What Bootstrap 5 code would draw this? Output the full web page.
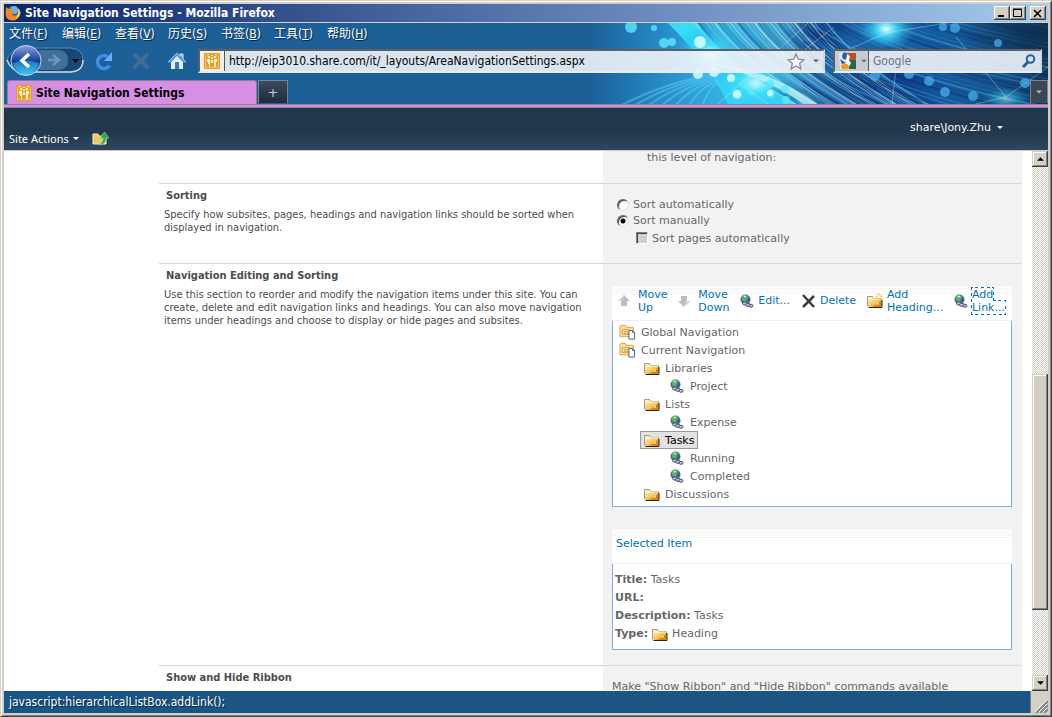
<!DOCTYPE html>
<html lang="en">
<head>
<meta charset="utf-8">
<meta name="viewport" content="width=device-width, initial-scale=1">
<title>Site Navigation Settings</title>
<link href="https://cdn.jsdelivr.net/npm/bootstrap@5.3.0/dist/css/bootstrap.min.css" rel="stylesheet">
<style>
:root{--tahoma:"DejaVu Sans Condensed","DejaVu Sans","Noto Sans CJK SC",sans-serif;--verdana:"DejaVu Sans",sans-serif}
body{font:11px/13px var(--verdana);color:#666;background:#d4d0c8}
button{padding:0;border:0;background:none;color:inherit;font:inherit}
a{text-decoration:none;color:#0072bc}
svg{display:block;flex:none}
.win{border:1px solid;border-color:#d4d0c8 #404040 #404040 #d4d0c8;box-shadow:inset 1px 1px #fff,inset -1px -1px #808080;padding:3px}
.titlebar{height:18px;background:linear-gradient(90deg,#0a246a,#a6caf0);color:#fff;font:bold 12px/18px var(--tahoma);padding:0 2px 0 1px}
.wbtn{width:16px;height:14px;background:#d4d0c8;box-shadow:inset -1px -1px #404040,inset 1px 1px #fff,inset -2px -2px #808080;display:grid;place-items:center}
.chrome{background:#1d5f97;border-top:1px solid #d4d0c8;height:82px;overflow:hidden}
.art{position:absolute;right:0;top:0;height:81px;width:460px}
.menubar{height:21px;padding-left:5px;gap:13px}
.menubar button{width:40px;white-space:nowrap;font:12px/20px "DejaVu Sans Condensed","Noto Sans CJK SC",sans-serif;color:#fff;text-shadow:1px 1px 1px #0a2a48;text-align:left}
.tools{height:33px;padding:0 6px 0 1px}
.field{height:24px;border:2px solid;border-color:#5a6068 #d4d8e0 #e8ecf4 #5a6068;background:rgba(240,243,248,.9);margin-top:1px}
.field input{border:0;background:none;font:12px/18px var(--tahoma);color:#000;min-width:0;padding:0 4px;outline:0}
.field input::placeholder{color:#70757c;opacity:1}
.fav{width:25px;height:20px;border-right:1px solid #555;background:#f3f0ee;display:grid;place-items:center}
.address{margin:1px 8px 0 11px}
.srch{width:209px}
.eng{width:34px;height:20px;background:#c7ccd2;border-right:1px solid #555}
.tabsrow{height:24px;margin-top:3px;padding-left:3px}
.pagetab{width:250px;height:24px;background:#d78fe4;border:1px solid #8c7a94;border-bottom:0;border-radius:3px 3px 0 0;color:#000;font:bold 12px/22px var(--tahoma);padding-left:8px;gap:4px}
.newtab{width:30px;height:23px;background:linear-gradient(#3c4c5e,#1d2b3a);border:1px solid #77838f;border-bottom:0;color:#ccc;font-size:13px;margin-left:1px}
.moretab{width:18px;height:23px;background:#3b4754;border:1px solid #77838f;border-bottom:0}
.pinkline{height:4px;background:#d78fe4;border:solid #8c8494;border-width:1px 0}
.ribbon{height:43px;background:linear-gradient(#21374c 0 55%,#2f465d);border-bottom:1px solid #c4cad8;color:#fff}
.siteact{font:11px/14px "Noto Sans",sans-serif;padding:23px 0 0 5px;gap:13px}
.user{padding:13px 45px 0 0;gap:6px}
.viewport{overflow:hidden;background:#fff}
.sheet{margin-left:155px;margin-right:10px}
.sec{border-top:1px solid #d8d8d8}
.info{flex:none;width:51.45%;color:#4c4c4c;padding:5px 14px 0 5px;font-family:var(--tahoma)}
.form-side{flex:1;min-width:0;background:#f2f2f2;padding:0 10px 0 9px}
.info h2{font:bold 11px/14px var(--tahoma);margin:0 0 5px 2px}
.first{height:32px;border:0}
.first .form-side{padding-left:44px}
.sorting{height:80px}
.sorting .form-side{padding:12px 10px 0 14px}
.opt{height:16px;gap:4px}
.opt input{appearance:none;margin:2px 0 0;width:12px;height:12px;flex:none}
.opt input[type=radio]{border-radius:50%;background:#fff;border:1px solid;border-color:#606060 #e4e0d8 #e4e0d8 #606060;box-shadow:inset 1px 1px #404040}
.opt input[type=radio]:checked{background:radial-gradient(circle,#000 0 2px,#fff 3px)}
.opt input[type=checkbox]{background:#d4d0c8;border:1px solid;border-color:#808080 #fff #fff #808080;box-shadow:inset 1px 1px #404040;margin-top:0}
.subopt{margin:2px 0 0 19px}
.editing{height:402px}
.ribbonopt .form-side{padding-top:14px;height:60px}
.strip{height:35px;margin-top:22px;background:repeating-linear-gradient(#f6f6f6 0 1px,#fff 1px 2px) top/100% 10px no-repeat,#fff;border-bottom:1px solid #eee}
.strip a{display:flex;align-items:center}
.cmds{padding:0 7px 5px 6px}
.picked{padding:8px 4px}
.boxed{background:#fff;border:1px solid #84abe2;border-top:0}
.tree{height:186px;padding:2px 0 0 6px}
.tree ul{list-style:none;margin:0;padding:0 0 0 25px}
.tree ul ul{padding-left:26px}
.tree span{display:flex;align-items:center;height:18px;gap:5px;width:max-content}
.tree ul ul span{gap:6px}
.tree .on{color:#000;background:#e2e2e2;box-shadow:0 0 0 1px #999;margin:1px 0 1px -3px;padding:0 3px;height:16px}
.focused{outline:1px dotted #0072bc}
.details{height:86px;padding:7px 2px;line-height:18px}
.sbar{width:16px;background:repeating-conic-gradient(#fff 0 25%,#d4d0c8 0 50%) 0 0/2px 2px}
.sbar button,.thumb{width:16px;color:#000;background:#d4d0c8;box-shadow:inset -1px -1px #404040,inset 1px 1px #d4d0c8,inset -2px -2px #808080,inset 2px 2px #fff}
.sbar button{height:16px;display:grid;place-items:center;flex:none}
.upward{transform:rotate(180deg)}
.status{height:22px;background:#1a5586;color:#fff;font:12px/22px var(--tahoma);text-shadow:1px 1px 1px #06233c;padding-left:5px}
.grip{width:18px;background:#d4d0c8;border-left:1px solid #808080}
</style>
</head>
<body>
<svg width="0" height="0" class="position-absolute" aria-hidden="true">
<defs>
<linearGradient id="gold" x1="0" y1="0" x2="1" y2="1"><stop offset="0" stop-color="#fff0b0"/><stop offset=".5" stop-color="#f5c860"/><stop offset="1" stop-color="#d07a06"/></linearGradient>
<linearGradient id="back" x1="0" y1="0" x2="0" y2="1"><stop offset="0" stop-color="#8e9fe0"/><stop offset=".5" stop-color="#16429c"/><stop offset=".55" stop-color="#0d3a8a"/><stop offset="1" stop-color="#3fd0ff"/></linearGradient>
<symbol id="folder" viewBox="0 0 16 13"><path d="M.5 11V1.500h5l1.500 2h7.500V11z" fill="#fbe9ae" stroke="#a39b8e"/><path d="M1 11V4l4 1 4-1h5v8H2z" fill="url(#gold)"/><path d="M1 4h13" stroke="#fff8d8"/><path d="M6 12l8-6v6z" fill="#d88410"/><path d="M8 9l4-2v3z" fill="#fbd469"/><path d="M1.500 12.500h13.500V5" fill="none" stroke="#2b2118"/></symbol>
<symbol id="globe" viewBox="0 0 14 14"><circle cx="5.500" cy="5.500" r="5" fill="#47719a"/><path d="M2 2q3-2 6 0l-1 3-2 3-3-2z" fill="#5fae66"/><path d="M3.500 1.500l3 .5-2 2z" fill="#d6ecd6"/><path d="M7.500 4l2 2-1 2z" fill="#2c4c70"/><g fill="#b9c0d4" stroke="#4f5672"><ellipse cx="5" cy="9.500" rx="2.500" ry="1.600"/><ellipse cx="8" cy="10.800" rx="2.500" ry="1.600"/><ellipse cx="11" cy="11.800" rx="2" ry="1.500"/></g></symbol>
<symbol id="site" viewBox="0 0 18 16"><path d="M1 13V2l1-1h5l1 2h7v10z" fill="#fbdf98" stroke="#d8a04c"/><path d="M3.500 5.500h8v5h-8zM5.500 7.500h4v2h-4z" fill="#fff1c2" stroke="#d79a3c"/><path d="M10.500 6.500h4l2 2v7h-6z" fill="#fff" stroke="#44597c"/><path d="M14.500 6.500v2h2" fill="none" stroke="#44597c"/></symbol>
<symbol id="people" viewBox="0 0 16 16"><rect width="16" height="16" rx="1" fill="#ea9c24"/><path d="M1.500 2v12.500h13V2" fill="none" stroke="#f6c470"/><g fill="#fff2cf"><path d="M3 6h3v8H5v-3H4v-2H3zM10 6h3v3h-1v5h-2zM7 7h2v3H7z"/><circle cx="5" cy="4" r="1.300"/><circle cx="8" cy="5" r="1.100"/><circle cx="11" cy="4" r="1.300"/><path d="M3 1h2v1H3zM7 2h2v1H7zM11 1h2v1h-2z"/></g></symbol>
<symbol id="arrow" viewBox="0 0 12 12"><path d="M6 0l6 6H9v5H3V6H0z" fill="#b9bec2"/><path d="M6 1L2 5.500h2" fill="none" stroke="#dfe2e4"/></symbol>
<symbol id="tri" viewBox="0 0 8 4"><path d="M0 0h8L4 4z" fill="currentColor"/></symbol>
</defs>
</svg>

<div class="win vh-100 d-flex flex-column">
  <header>
    <div class="titlebar d-flex align-items-center">
      <svg width="16" height="16" viewBox="0 0 16 16"><circle cx="8" cy="8" r="7" fill="#2d62b2"/><circle cx="9" cy="5" r="4" fill="#6fb0e0"/><path d="M1 2l3 2 3 0-1 2 3 1-2 2q1 3 5 1 3-2 2-6 3 4 0 8-3 4-7 3.500Q1 15 .5 9z" fill="#ee8a1c"/><path d="M13 3q4 4 1 8-1 2-4 3 4-4 3-11z" fill="#f8cf54"/></svg>
      <span class="flex-fill text-truncate px-1">Site Navigation Settings - Mozilla Firefox</span>
      <button class="wbtn" aria-label="Minimize"><svg width="10" height="9"><path d="M1 7h6" stroke="#000" stroke-width="2"/></svg></button>
      <button class="wbtn" aria-label="Maximize"><svg width="10" height="10"><path d="M.5 1.500h8v7h-8zM0 1h9" fill="none" stroke="#000"/></svg></button>
      <button class="wbtn ms-1" aria-label="Close"><svg width="10" height="9"><path d="M1 1l7 7M8 1L1 8" stroke="#000" stroke-width="1.600"/></svg></button>
    </div>
    <div class="chrome position-relative">
      <svg class="art" viewBox="0 0 460 81" aria-hidden="true">
        <defs>
          <linearGradient id="sky"><stop offset="0" stop-color="#1d5f97"/><stop offset=".08" stop-color="#2074ae"/><stop offset=".2" stop-color="#2a96d4"/><stop offset=".3" stop-color="#34b4e0"/><stop offset=".42" stop-color="#3a9cc8"/><stop offset=".55" stop-color="#1a62a4"/><stop offset=".75" stop-color="#155a9e"/><stop offset=".9" stop-color="#155084"/><stop offset="1" stop-color="#103456"/></linearGradient>
          <radialGradient id="glow"><stop offset="0" stop-color="#e8ffff"/><stop offset=".35" stop-color="#42e0fa" stop-opacity=".85"/><stop offset="1" stop-color="#20a0e0" stop-opacity="0"/></radialGradient>
          <radialGradient id="deep"><stop offset="0" stop-color="#06246c"/><stop offset="1" stop-color="#06246c" stop-opacity="0"/></radialGradient>
          <radialGradient id="night"><stop offset="0" stop-color="#0e3050"/><stop offset="1" stop-color="#0e3050" stop-opacity="0"/></radialGradient>
        </defs>
        <path d="M0 0h460v81H0z" fill="url(#sky)"/>
        <path d="M80 0h30q40 55 105 81h-75Q120 40 80 0z" fill="#36dcf8"/>
        <ellipse cx="285" cy="66" rx="75" ry="36" fill="url(#deep)"/>
        <ellipse cx="232" cy="12" rx="34" ry="36" fill="url(#deep)"/>
        <g id="streaks" fill="none"></g>
        <ellipse cx="450" cy="10" rx="80" ry="34" fill="url(#night)"/>
        <ellipse cx="122" cy="32" rx="36" ry="30" fill="url(#glow)"/>
        <ellipse cx="168" cy="60" rx="46" ry="30" fill="url(#glow)" opacity=".8"/>
        <path d="M215 81Q180 55 120 40q60 5 110 41z" fill="#c8faff" opacity=".7"/>
        <ellipse cx="298" cy="6" rx="30" ry="22" fill="url(#glow)"/>
        <ellipse cx="418" cy="76" rx="24" ry="12" fill="url(#glow)" opacity=".5"/>
        <g stroke="#d8fbff" stroke-opacity=".35"><path d="M298 10l60-10M298 10l-34 15M418 74l-50-60M418 74l42-30M418 74l-30 7M130 81l90-81M160 70l86-66M150 60l30 21M304 81l5-45"/></g>
        <g fill="#5de8fa" fill-opacity=".8"><circle cx="43" cy="4" r="6"/><circle cx="66" cy="5" r="3"/><circle cx="76" cy="20" r="5"/><circle cx="84" cy="19" r="4"/><circle cx="149" cy="72" r="5"/><circle cx="164" cy="69" r="3"/><circle cx="183" cy="71" r="4"/><circle cx="182" cy="61" r="4"/><circle cx="197" cy="66" r="4"/><circle cx="198" cy="77" r="4"/></g>
        <g fill="#d8ffff" fill-opacity=".85"><circle cx="112" cy="19" r="6"/><circle cx="110" cy="51" r="5"/><circle cx="126" cy="49" r="5"/><circle cx="143" cy="55" r="4"/><circle cx="149" cy="71" r="4"/><circle cx="182" cy="70" r="3"/></g>
        <g fill="#49acea" fill-opacity=".75"><circle cx="355" cy="4" r="4"/><circle cx="367" cy="5" r="5"/><circle cx="410" cy="20" r="4"/><circle cx="287" cy="53" r="5"/><circle cx="321" cy="51" r="5"/><circle cx="341" cy="58" r="5"/><circle cx="357" cy="69" r="5"/><circle cx="385" cy="73" r="5"/><circle cx="437" cy="60" r="5"/></g>
      </svg>
      <div class="position-relative">
        <nav class="menubar d-flex" aria-label="Menu">
          <button>文件(<u>F</u>)</button><button>编辑(<u>E</u>)</button><button>查看(<u>V</u>)</button><button>历史(<u>S</u>)</button><button>书签(<u>B</u>)</button><button>工具(<u>T</u>)</button><button>帮助(<u>H</u>)</button>
        </nav>
        <div class="tools d-flex align-items-center">
          <button aria-label="Back and forward"><svg width="80" height="32" viewBox="0 0 80 32"><path d="M18 3h48q12 1 12 12t-12 12H18Q5 27 2 15 5 4 18 3z" fill="#174873" stroke="#5c86aa"/><path d="M2 15q4 11 16 12h48q12-1 12-12" fill="none" stroke="#c5d5e4" stroke-width="1.500"/><path d="M34 5h20q9 1 9 10t-9 10H34z" fill="#406f9c"/><path d="M48 10l6 5-6 5M43 15h10" fill="none" stroke="#6f95b8" stroke-width="2.500"/><path d="M67 14h7l-3.500 4z" fill="#000"/><circle cx="21" cy="15.500" r="15" fill="url(#back)" stroke="#c5d8f2"/><path d="M8 18q13-5 26 0-3 10-13 10T8 18z" fill="#42ccf8" opacity=".45"/><path d="M24 9l-7 6.500 7 6.500" fill="none" stroke="#fff" stroke-width="3.500"/></svg></button>
          <button class="ms-2" aria-label="Reload"><svg width="22" height="22" viewBox="0 0 22 22"><path d="M14.500 6.500a6.500 6.500 0 1 0 2 9" fill="none" stroke="#3f8ee4" stroke-width="3.500"/><path d="M19 2v9h-8z" fill="#65aff5"/></svg></button>
          <button class="ms-3" aria-label="Stop"><svg width="20" height="20" viewBox="0 0 20 20"><path d="M3 3l14 14M17 3L3 17" stroke="#416c94" stroke-width="4"/></svg></button>
          <button class="ms-3" aria-label="Home"><svg width="20" height="20" viewBox="0 0 20 20"><path d="M1 11L10 2l3 3V3h3v5l3 3" fill="#71b3ef" stroke="#d8eafc"/><path d="M4 10l6-6 6 6v8H4z" fill="#e7f1fb"/><path d="M1 11l9-9 9 9-2 1-7-7-7 7z" fill="#4a93e1"/><path d="M8 11h4v7H8z" fill="#3c76bb"/></svg></button>
          <div class="field address d-flex align-items-center flex-fill">
            <span class="fav"><svg width="16" height="16"><use href="#people"/></svg></span>
            <input class="flex-fill" type="text" aria-label="Address" value="http://eip3010.share.com/it/_layouts/AreaNavigationSettings.aspx">
            <svg width="18" height="17" viewBox="0 0 18 17"><path d="M9 1l2.300 5.200 5.500.5-4.200 3.700 1.300 5.500L9 13l-4.900 2.900 1.300-5.500L1.200 6.700l5.500-.5z" fill="#f4f6f8" stroke="#858b94" stroke-width="1.300"/></svg>
            <svg class="ms-2 me-1" width="6" height="4" color="#666"><use href="#tri"/></svg>
          </div>
          <div class="field srch d-flex align-items-center">
            <button class="eng d-flex align-items-center" aria-label="Search engine"><svg class="ms-1" width="18" height="18" viewBox="0 0 18 18"><path d="M8 1h9v8H8z" fill="#b5522b"/><path d="M10 8h7v9h-7z" fill="#216a4a"/><path d="M0 1h8v16H1z" fill="#dfe7f1"/><ellipse cx="6" cy="4" rx="2.800" ry="3.500" fill="#2a5cae"/><path d="M1 7l6 4-4 1z" fill="#2a5cae"/><path d="M8 2l3 2-1 4 2 3-2 4H8l-1-6z" fill="#f4f6fa"/><ellipse cx="6" cy="14.500" rx="4" ry="2.700" fill="#f09a24"/></svg><svg class="ms-1" width="6" height="4" viewBox="0 0 8 4" color="#666"><use href="#tri"/></svg></button>
            <input class="flex-fill" type="search" aria-label="Search" placeholder="Google">
            <button class="me-1" aria-label="Search"><svg width="14" height="14" viewBox="0 0 14 14"><circle cx="8.500" cy="5" r="3.800" fill="none" stroke="#2262a3" stroke-width="2"/><path d="M6 8l-5 5" stroke="#2262a3" stroke-width="3"/></svg></button>
          </div>
        </div>
        <div class="tabsrow d-flex">
          <button class="pagetab d-flex align-items-center"><svg width="16" height="16"><use href="#people"/></svg>Site Navigation Settings</button>
          <button class="newtab" aria-label="New tab">+</button>
          <button class="moretab ms-auto d-flex align-items-center justify-content-center" aria-label="All tabs"><svg width="6" height="4" color="#bbb"><use href="#tri"/></svg></button>
        </div>
      </div>
    </div>
    <div class="pinkline"></div>
    <div class="ribbon d-flex justify-content-between align-items-start">
      <div class="siteact d-flex align-items-center"><button class="d-flex align-items-center gap-1">Site Actions<svg width="6" height="3" viewBox="0 0 8 4"><use href="#tri"/></svg></button>
        <button aria-label="Navigate up"><svg width="17" height="15" viewBox="0 0 17 15"><path d="M1 13V3h5l1 2h7v8z" fill="#e9c96c" stroke="#fff0b2"/><path d="M6 13q5 0 5-6H8l4.500-6L17 7h-3q0 6-6 7z" fill="#2fa64c" stroke="#a6e3a2" stroke-width=".6"/></svg></button></div>
      <button class="user d-flex align-items-center">share\Jony.Zhu<svg width="6" height="3" viewBox="0 0 8 4"><use href="#tri"/></svg></button>
    </div>
  </header>

  <div class="d-flex flex-fill overflow-hidden">
    <main class="viewport flex-fill">
      <div class="sheet">
        <section class="sec first d-flex"><div class="info"></div><div class="form-side">this level of navigation:</div></section>
        <section class="sec sorting d-flex">
          <div class="info"><h2>Sorting</h2><p class="m-0">Specify how subsites, pages, headings and navigation links should be sorted when displayed in navigation.</p></div>
          <div class="form-side">
            <div class="opt d-flex align-items-center"><input type="radio" name="sort" id="auto"><label for="auto">Sort automatically</label></div>
            <div class="opt d-flex align-items-center"><input type="radio" name="sort" id="manual" checked><label for="manual">Sort manually</label></div>
            <div class="opt subopt d-flex align-items-center"><input type="checkbox" id="pages" disabled><label for="pages">Sort pages automatically</label></div>
          </div>
        </section>
        <section class="sec editing d-flex">
          <div class="info"><h2>Navigation Editing and Sorting</h2><p class="m-0">Use this section to reorder and modify the navigation items under this site. You can create, delete and edit navigation links and headings. You can also move navigation items under headings and choose to display or hide pages and subsites.</p></div>
          <div class="form-side">
            <div class="strip cmds d-flex justify-content-between">
              <a href="#" class="gap-2"><svg width="12" height="12"><use href="#arrow"/></svg><span>Move<br>Up</span></a>
              <a href="#" class="gap-2"><svg class="upward" width="12" height="12"><use href="#arrow"/></svg><span>Move<br>Down</span></a>
              <a href="#" class="gap-1"><svg width="14" height="14"><use href="#globe"/></svg><span>Edit...</span></a>
              <a href="#" class="gap-1"><svg width="15" height="14" viewBox="0 0 15 14"><path d="M2 1l11 12M13 2L2 13" stroke="#3a3a40" stroke-width="2.500"/></svg><span>Delete</span></a>
              <a href="#" class="gap-1"><svg width="16" height="15" viewBox="0 -2 16 15"><use href="#folder" width="16" height="13"/><path d="M12-2v7M8.500 1.500h7M9.500-1l5 5M14.500-1l-5 5" stroke="#f8c542"/><circle cx="12" cy="1.500" r="1.500" fill="#fffbe0"/></svg><span>Add<br>Heading...</span></a>
              <a href="#" class="gap-1"><svg width="14" height="14"><use href="#globe"/></svg><span><span class="focused">Add<br>Link...</span></span></a>
            </div>
            <div class="boxed tree">
              <span><svg width="17" height="16"><use href="#site"/></svg>Global Navigation</span>
              <span><svg width="17" height="16"><use href="#site"/></svg>Current Navigation</span>
              <ul>
                <li><span><svg width="16" height="13"><use href="#folder"/></svg>Libraries</span><ul><li><span><svg width="14" height="14"><use href="#globe"/></svg>Project</span></li></ul></li>
                <li><span><svg width="16" height="13"><use href="#folder"/></svg>Lists</span><ul><li><span><svg width="14" height="14"><use href="#globe"/></svg>Expense</span></li></ul></li>
                <li><span class="on"><svg width="16" height="13"><use href="#folder"/></svg>Tasks</span><ul><li><span><svg width="14" height="14"><use href="#globe"/></svg>Running</span></li><li><span><svg width="14" height="14"><use href="#globe"/></svg>Completed</span></li></ul></li>
                <li><span><svg width="16" height="13"><use href="#folder"/></svg>Discussions</span></li>
              </ul>
            </div>
            <div class="strip picked"><a href="#">Selected Item</a></div>
            <div class="boxed details">
              <div><b>Title:</b> Tasks</div><div><b>URL:</b></div><div><b>Description:</b> Tasks</div>
              <div class="d-flex align-items-center gap-1"><b>Type:</b><svg width="16" height="13"><use href="#folder"/></svg>Heading</div>
            </div>
          </div>
        </section>
        <section class="sec ribbonopt d-flex"><div class="info"><h2>Show and Hide Ribbon</h2></div><div class="form-side">Make "Show Ribbon" and "Hide Ribbon" commands available</div></section>
      </div>
    </main>
    <div class="sbar d-flex flex-column">
      <button aria-label="Scroll up"><svg class="upward" width="7" height="4"><use href="#tri"/></svg></button>
      <div style="flex:207"></div><div class="thumb" style="flex:236"></div><div style="flex:65"></div>
      <button aria-label="Scroll down"><svg width="7" height="4"><use href="#tri"/></svg></button>
    </div>
  </div>
  <footer class="d-flex"><div class="status flex-fill">javascript:hierarchicalListBox.addLink();</div><div class="grip d-flex align-items-end justify-content-end"><svg width="13" height="13" viewBox="0 0 13 13"><path d="M1 13L13 1M5 13l8-8M9 13l4-4" stroke="#808080" stroke-width="2"/><path d="M0 12L12 0M4 12l8-8M8 12l4-4" stroke="#fff"/></svg></div></footer>
</div>
<script src="https://cdn.jsdelivr.net/npm/bootstrap@5.3.0/dist/js/bootstrap.bundle.min.js"></script>
<script>
// Fine light fibres sweeping across the toolbar theme
const pale=['#c4f0fa','#2f86c0','#8fdcf0','#1a5a98','#6cc6e4'];
const blue=['#2f8ad2','#0b347a','#1b66b0','#4aa8e4','#092a64'];
let out='';
for(let i=0;i<34;i++){
  const x=104+i*4;
  out+=`<path d="M${x} -4Q${x+30} 40 ${x+115} 88" stroke="${pale[(i*3)%5]}" stroke-opacity=".6" stroke-width="${1+i%2}"/>`;
}
for(let i=0;i<44;i++){
  const y=-70+i*4;
  out+=`<path d="M215 ${y-20}Q290 ${y+40} 470 ${y+72}" stroke="${blue[(i*3)%5]}" stroke-opacity=".45" stroke-width="${1+i%2}"/>`;
}
for(let i=0;i<7;i++)out+=`<path d="M${30+i*14} 84Q${75+i*8} 60 130 ${50+i*2}" stroke="#5cd0f4" stroke-opacity=".5" stroke-width="2"/>`;
document.getElementById('streaks').innerHTML=out;
</script>
</body>
</html>
